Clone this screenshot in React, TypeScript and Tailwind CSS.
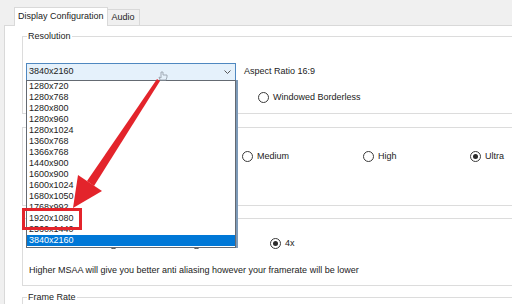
import React from "react";

function Radio({ checked = false, label, className = "" }: { checked?: boolean; label?: string; className?: string }) {
  return (
    <div className={`flex items-center gap-[4px] h-[11px] ${className}`}>
      <span className="w-[11px] h-[11px] shrink-0 rounded-full border border-[#3a3a3a] bg-white flex items-center justify-center">
        {checked && <span className="w-[5px] h-[5px] rounded-full bg-[#2a2a2a]" />}
      </span>
      {label && <span className="leading-[11px] whitespace-nowrap">{label}</span>}
    </div>
  );
}

function Group({ label, className = "", children }: { label?: string; className?: string; children?: React.ReactNode }) {
  return (
    <div className={`relative border border-[#dcdcdc] mr-[-20px] ${className}`}>
      {label && (
        <span className="absolute left-[4px] -top-[7px] bg-white px-[1px] leading-[12px] whitespace-nowrap">{label}</span>
      )}
      {children}
    </div>
  );
}

const resolutions = [
  "1280x720",
  "1280x768",
  "1280x800",
  "1280x960",
  "1280x1024",
  "1360x768",
  "1366x768",
  "1440x900",
  "1600x900",
  "1600x1024",
  "1680x1050",
  "1768x992",
  "1920x1080",
  "2560x1440",
  "3840x2160",
];

export default function App() {
  return (
    <div className="relative w-[512px] h-[304px] overflow-hidden bg-[#f0f0f0] text-[9px] text-[#222] font-['Liberation_Sans',Arial,sans-serif] flex flex-col">
      {/* Tabs */}
      <div className="h-[25px] shrink-0 flex items-end pl-[14px] relative z-10">
        <div className="h-[19px] mb-[-1px] bg-white border border-[#d9d9d9] border-b-0 px-[3px] flex items-center">
          Display Configuration
        </div>
        <div className="h-[16px] bg-[#f0f0f0] border border-[#d9d9d9] border-l-0 border-b-0 px-[4px] flex items-center">
          Audio
        </div>
      </div>

      {/* Tab page */}
      <div className="flex-1 ml-[4px] bg-white border-l border-t border-[#d9d9d9] pl-[17px] flex flex-col">
        <Group label="Resolution" className="mt-[10px] h-[78px] shrink-0">
          <div className="pt-[26px] pl-[3px] flex items-center">
            <div className="w-[210px] h-[18px] border border-[#4f88c0] bg-[#e5f1fb] flex items-center justify-between pl-[2px] pr-[4px]">
              <span>3840x2160</span>
              <svg width="7" height="4" viewBox="0 0 7 4">
                <polyline points="0.5,0.5 3.5,3.5 6.5,0.5" fill="none" stroke="#555" strokeWidth="1" />
              </svg>
            </div>
            <span className="ml-[8px]">Aspect Ratio 16:9</span>
          </div>
          <div className="mt-[11px] pl-[235px] flex">
            <Radio label="Windowed Borderless" />
          </div>
        </Group>

        <Group className="mt-[13px] h-[79px] shrink-0">
          <div className="pt-[23px] pl-[219px] flex">
            <Radio label="Medium" className="w-[121px]" />
            <Radio label="High" className="w-[107px]" />
            <Radio label="Ultra" checked />
          </div>
        </Group>

        <Group className="mt-[12px] h-[68px] shrink-0">
          <div className="pt-[19px] pl-[85px] flex">
            <Radio className="w-[83px]" />
            <Radio className="w-[79px]" />
            <Radio label="4x" checked />
          </div>
          <div className="mt-[16px] pl-[6px] leading-[11px] whitespace-nowrap">
            Higher MSAA will give you better anti aliasing however your framerate will be lower
          </div>
        </Group>

        <Group label="Frame Rate" className="mt-[11px] h-[40px] shrink-0" />
      </div>

      {/* Open dropdown list */}
      <div className="absolute left-[26px] top-[80px] w-[210px] h-[168px] bg-white border border-[#646a72] shadow-[2px_0_0_#7d9ab8] flex flex-col z-20">
        {resolutions.map((r, i) => (
          <div
            key={r}
            className={
              i === resolutions.length - 1
                ? "h-[11px] leading-[11px] pl-[2px] bg-[#0078d7] text-white"
                : "h-[11px] leading-[11px] pl-[2px]"
            }
          >
            {r}
          </div>
        ))}
      </div>

      {/* Red highlight box */}
      <div className="absolute left-[22px] top-[208px] w-[60px] h-[22px] border-[3px] border-[#e3242b] z-30" />

      {/* Red arrow + cursor */}
      <svg className="absolute left-0 top-0 z-30 pointer-events-none" width="512" height="304" viewBox="0 0 512 304">
        <polygon points="157,79 160,81 94,186 87,181" fill="#e3242b" />
        <polygon points="78,175 102,191 73,208" fill="#e3242b" />
        <g fill="none" stroke="#9aa4ae" strokeWidth="0.9">
          <path d="M161,72 L161,78 L159,77 L160,80 L166,80 L167,77 L167,75 L163,75 L163,72 Z" />
        </g>
      </svg>
    </div>
  );
}
